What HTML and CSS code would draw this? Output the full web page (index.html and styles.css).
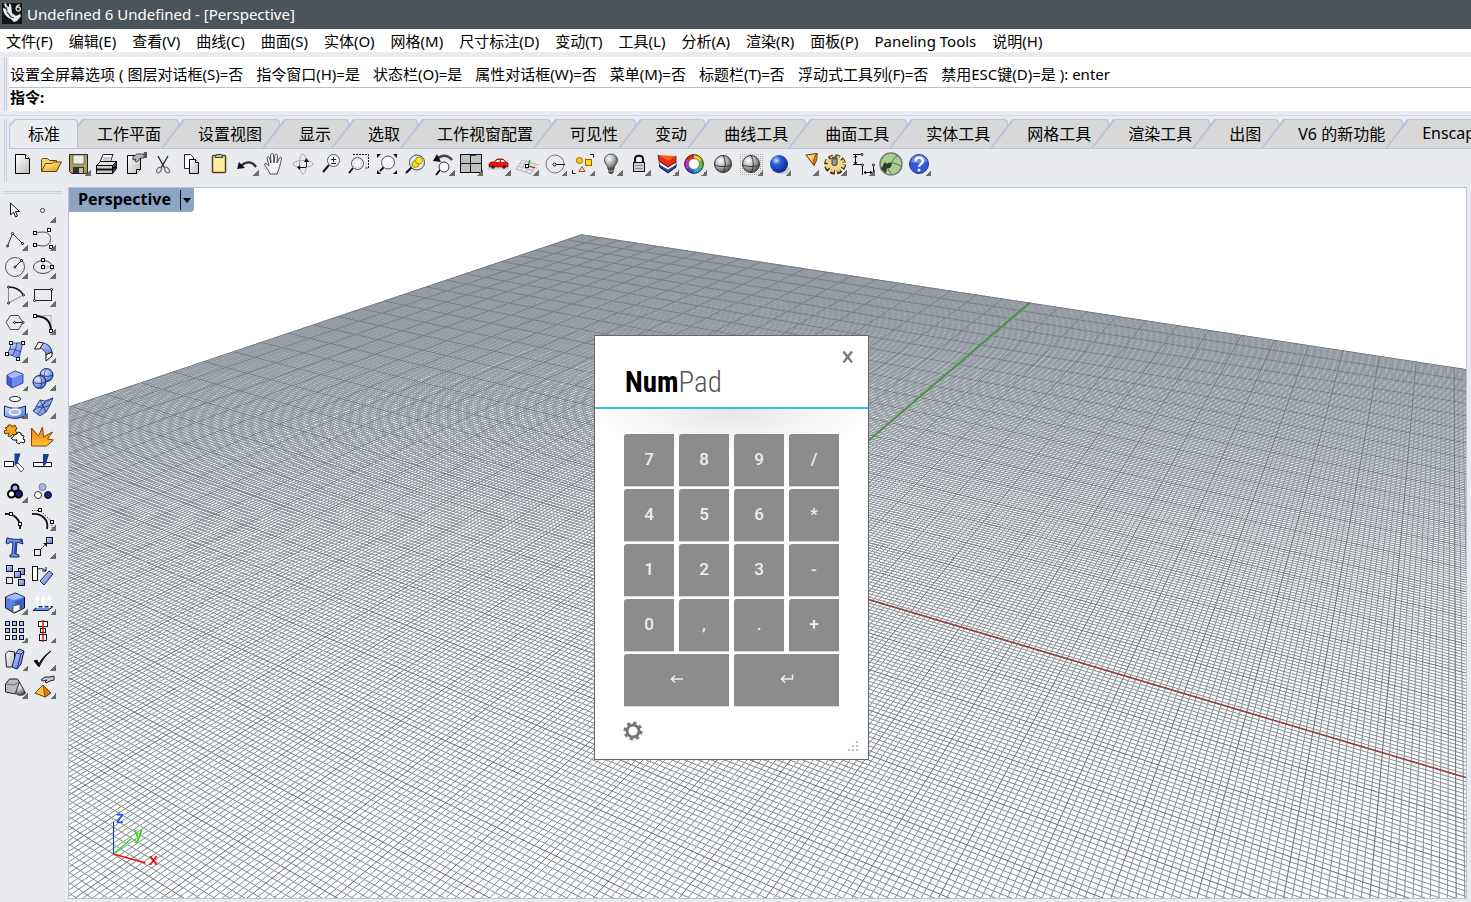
FILE: index.html
```html
<!DOCTYPE html>
<html lang="zh-CN">
<head>
    <meta charset="UTF-8">
    <meta name="viewport" content="width=device-width, initial-scale=1.0">
    <title>Undefined 6 Undefined - [Perspective]</title>
    <link rel="stylesheet" href="styles.css">
</head>
<body>

    <svg class="defs" width="0" height="0" aria-hidden="true">
        <defs>
            <linearGradient id="g-yellow" x1="0" y1="0" x2="1" y2="1"><stop offset="0" stop-color="#fff3a0"/><stop offset="1" stop-color="#e89a10"/></linearGradient>
            <linearGradient id="g-blue" x1="0" y1="0" x2="1" y2="1"><stop offset="0" stop-color="#d5e2ff"/><stop offset="1" stop-color="#4a70e0"/></linearGradient>
            <linearGradient id="g-grey" x1="0" y1="0" x2="1" y2="1"><stop offset="0" stop-color="#fff"/><stop offset="1" stop-color="#bbb"/></linearGradient>
            <linearGradient id="g-orange" x1="0" y1="0" x2="0" y2="1"><stop offset="0" stop-color="#f77a00"/><stop offset="1" stop-color="#ffc23a"/></linearGradient>
            <radialGradient id="b-grey" cx=".35" cy=".3" r=".75"><stop offset="0" stop-color="#fff"/><stop offset=".5" stop-color="#b4b4b4"/><stop offset="1" stop-color="#444"/></radialGradient>
            <radialGradient id="b-blue" cx=".35" cy=".3" r=".8"><stop offset="0" stop-color="#d8e6ff"/><stop offset=".3" stop-color="#2a62d8"/><stop offset="1" stop-color="#041c80"/></radialGradient>
            <radialGradient id="b-soft" cx=".35" cy=".3" r=".8"><stop offset="0" stop-color="#e2eaff"/><stop offset="1" stop-color="#4468d8"/></radialGradient>
            <pattern id="dots" width="2" height="2" patternUnits="userSpaceOnUse"><rect width="1" height="1" fill="#b4b4b4"/></pattern>
        </defs>
    </svg>

    <header class="title-bar">
        <svg class="app-icon" viewBox="0 0 20 21"><rect width="20" height="21" fill="#161616"/><path d="M1 5c0 5 3 9 8 11l3 3 3-1 4-5-1-2-4 2-4-3-1-8-2-2 0 4-2-1-1-3-2 1 2 5z" fill="#eee"/><path d="M5 9l4 5 3 1M4 4l1 4" fill="none" stroke="#444" stroke-width="1.300"/><path d="M18 2c-4-1-5 6-2 6 3 0 3-4 0-4-1 0-2 1-2 2" fill="none" stroke="#ddd" stroke-width="1.300"/></svg>
        <span>Undefined 6 Undefined - [Perspective]</span>
    </header>

    <nav class="menu-bar">
        <button>文件(F)</button><button>编辑(E)</button><button>查看(V)</button><button>曲线(C)</button><button>曲面(S)</button><button>实体(O)</button><button>网格(M)</button><button>尺寸标注(D)</button><button>变动(T)</button><button>工具(L)</button><button>分析(A)</button><button>渲染(R)</button><button>面板(P)</button><button>Paneling Tools</button><button>说明(H)</button>
    </nav>

    <section class="command">
        <div class="history">
            <span class="lead">设置全屏幕选项 ( </span>
            <button>图层对话框(S)=否</button>
            <button>指令窗口(H)=是</button>
            <button>状态栏(O)=是</button>
            <button>属性对话框(W)=否</button>
            <button>菜单(M)=否</button>
            <button>标题栏(T)=否</button>
            <button>浮动式工具列(F)=否</button>
            <span><button>禁用ESC键(D)=是</button> ): enter</span>
        </div>
        <div class="prompt"><label for="cmd">指令:</label><input id="cmd" type="text"></div>
    </section>

    <section class="toolbars">
        <div class="tabs">
            <button class="tab active"><span>标准</span></button>
            <button class="tab"><span>工作平面</span></button>
            <button class="tab"><span>设置视图</span></button>
            <button class="tab"><span>显示</span></button>
            <button class="tab"><span>选取</span></button>
            <button class="tab"><span>工作视窗配置</span></button>
            <button class="tab"><span>可见性</span></button>
            <button class="tab"><span>变动</span></button>
            <button class="tab"><span>曲线工具</span></button>
            <button class="tab"><span>曲面工具</span></button>
            <button class="tab"><span>实体工具</span></button>
            <button class="tab"><span>网格工具</span></button>
            <button class="tab"><span>渲染工具</span></button>
            <button class="tab"><span>出图</span></button>
            <button class="tab"><span>V6 的新功能</span></button>
            <button class="tab"><span>Enscape</span></button>
        </div>
        <div class="tools">
            <button class="tool" aria-label="新建"><svg viewBox="0 0 28 28"><path d="M7.500 4.500h10l4 4v15h-14z" fill="url(#g-grey)" stroke="#000"/><path d="M17.500 4.500v4h4" fill="#fff" stroke="#000"/></svg></button>
            <button class="tool" aria-label="打开"><svg viewBox="0 0 28 28"><path d="M5.500 21V9.500l1-1h5l2 2h7v3" fill="#f6d565" stroke="#5c4408"/><path d="M5.500 21.500l4-8h6l2-1.500h8l-5 9.500z" fill="url(#g-yellow)" stroke="#5c4408"/></svg></button>
            <button class="tool more" aria-label="保存"><svg viewBox="0 0 28 28"><path d="M5.500 4.500h18v19h-16l-2-2z" fill="#a9a05b" stroke="#222"/><rect x="9" y="5" width="11" height="9" fill="#e8eee8" stroke="#555" stroke-width=".7"/><rect x="9" y="17" width="11" height="6" fill="#333"/><rect x="15" y="18" width="4" height="5" fill="#bbb"/></svg></button>
            <button class="tool" aria-label="打印"><svg viewBox="0 0 28 28"><path d="M8 12l3-7.500h10l-3 8" fill="#fff" stroke="#222"/><path d="M12 8h6M11 10h6" stroke="#999"/><path d="M4.500 15.500l4-4h16l-4 4z" fill="#ddd" stroke="#000"/><path d="M4.500 15.500h16v8h-16z" fill="#ccc" stroke="#000"/><path d="M20.500 15.500l4-4v7l-4 5z" fill="#555" stroke="#000"/><path d="M5 19.500h15.500l4-4" fill="none" stroke="#111" stroke-width="1.800"/></svg></button>
            <button class="tool" aria-label="文件属性"><svg viewBox="0 0 28 28"><path d="M7.500 5.500h13v14l-4 4h-9z" fill="url(#g-grey)" stroke="#000"/><path d="M20.500 19.500h-4v4" fill="#fff" stroke="#000"/><path d="M13 7l4-3h7v4l-4 0-2 3-2 1-1-1 1-2-3 1z" fill="#bbb" stroke="#222" stroke-width=".8"/><path d="M24 2v6h3V2z" fill="#555"/></svg></button>
            <button class="tool" aria-label="剪切"><svg viewBox="0 0 28 28"><path d="M10 6l6.500 12M20 6l-7 12" stroke="#222" stroke-width="1.300"/><ellipse cx="11" cy="20" rx="2" ry="3" transform="rotate(35 11 20)" fill="none" stroke="#777" stroke-width="1.300"/><ellipse cx="19" cy="20" rx="2" ry="3" transform="rotate(-35 19 20)" fill="none" stroke="#777" stroke-width="1.300"/></svg></button>
            <button class="tool" aria-label="复制"><svg viewBox="0 0 28 28"><path d="M8.500 4.500h6l3 3v11h-9z" fill="#fff" stroke="#222"/><path d="M13.500 9.500h6l3 3v11h-9z" fill="url(#g-grey)" stroke="#000"/><path d="M19.500 9.500v3h3" fill="#fff" stroke="#000"/></svg></button>
            <button class="tool" aria-label="粘贴"><svg viewBox="0 0 28 28"><rect x="8.500" y="5.500" width="13" height="17" rx="1" fill="#ffef9c" stroke="#4c4020" stroke-width="1.500"/><path d="M11 7.500l1.500-3h5l1.500 3z" fill="#bbb" stroke="#444"/></svg></button>
            <button class="tool more" aria-label="撤销"><svg viewBox="0 0 28 28"><path d="M9 16c5-5 11-5 15 1" fill="none" stroke="#333" stroke-width="2.300"/><path d="M5 19l2-7 6 6z" fill="#111"/></svg></button>
            <button class="tool" aria-label="平移"><svg viewBox="0 0 28 28"><path d="M10 24c-1-4-5-7-5.500-10 1-1.500 3 0 4.500 2L7 8c.5-2 2-1.500 2.500 0l1.500 5-.5-8c.5-2 2.500-2 3 0l.5 8 1-7.500c.5-2 2.500-1.500 2.500 0L17 13l2.500-5c1-1.500 2.500-.5 2 1-1.500 5-2 10-4.500 15z" fill="#f5f5f5" stroke="#222" stroke-width=".8"/></svg></button>
            <button class="tool" aria-label="旋转视图"><svg viewBox="0 0 28 28"><ellipse cx="15" cy="14" rx="10" ry="3.500" fill="none" stroke="#aaa"/><ellipse cx="15" cy="14" rx="3.500" ry="10" fill="none" stroke="#aaa"/><path d="M12 17.500h6M18.500 11v6" stroke="#111"/><path d="M12 15v5l-3-2.500zM16 12h5l-2.500-4z" fill="#111"/></svg></button>
            <button class="tool" aria-label="动态缩放"><svg viewBox="0 0 28 28"><path d="M13 15l-6 7" stroke="#111" stroke-width="2"/><circle cx="17.500" cy="10.500" r="6" fill="#f5f5f5" stroke="#555"/><path d="M15 9.500h5M17.500 7v5M15 13.500h5" stroke="#222"/></svg></button>
            <button class="tool" aria-label="框选缩放"><svg viewBox="0 0 28 28"><path d="M9 4.500h15.500v13.500h-4" fill="none" stroke="#111" stroke-dasharray="2 1"/><path d="M9 18l-4 5" stroke="#111" stroke-width="2"/><circle cx="13.500" cy="13.500" r="6" fill="#f5f5f5" stroke="#555"/><rect x="10" y="10" width="7" height="7" fill="none" stroke="#ccc" stroke-dasharray="2 1"/></svg></button>
            <button class="tool" aria-label="缩放至最大范围"><svg viewBox="0 0 28 28"><path d="M12 17l-4 4" stroke="#111" stroke-width="2"/><circle cx="16" cy="12.500" r="6.500" fill="#f5f5f5" stroke="#555"/><path d="M5 4h4l-4 4zM25 4h-4l4 4zM5 24h4l-4-4zM25 24h-4l4-4z" fill="#111"/></svg></button>
            <button class="tool" aria-label="缩放至选取物件"><svg viewBox="0 0 28 28"><path d="M12 17l-6 6" stroke="#111" stroke-width="2.200"/><circle cx="17" cy="12.500" r="7.500" fill="#eee" stroke="#444"/><circle cx="15.500" cy="14" r="3.500" fill="#f8e01a" stroke="#776600" stroke-width=".7"/><circle cx="19" cy="10.500" r="3.500" fill="#ffea20" stroke="#776600" stroke-width=".7"/></svg></button>
            <button class="tool more" aria-label="还原视图"><svg viewBox="0 0 28 28"><path d="M12 20l-4 5" stroke="#111" stroke-width="2"/><circle cx="16" cy="17" r="5" fill="#f5f5f5" stroke="#333"/><path d="M9 9c5-5 11-4 15 1" fill="none" stroke="#444" stroke-width="2.500"/><path d="M5 11l4-7 4 8z" fill="#111"/></svg></button>
            <button class="tool more" aria-label="四个视图"><svg viewBox="0 0 28 28"><rect x="4.500" y="4.500" width="21" height="18" fill="#c0c0c0" stroke="#111"/><path d="M5 13.500h20M14.500 5v17.500" stroke="#111"/><path d="M15 5.500h5" stroke="#1836b0"/></svg></button>
            <button class="tool more" aria-label="设置视图"><svg viewBox="0 0 28 28"><path d="M4 19h21" stroke="#bbb"/><path d="M5 17v-3l2-2h3l3-3h6l3 3 2 1v4z" fill="#e81414" stroke="#7a0000" stroke-width=".7"/><path d="M11 12l2.500-2h2v2zM17 10h2l2 2h-4z" fill="#fff"/><circle cx="9" cy="17" r="1.700" fill="#222"/><circle cx="20" cy="17" r="1.700" fill="#222"/></svg></button>
            <button class="tool more" aria-label="设置工作平面"><svg viewBox="0 0 28 28"><path d="M10 10l17 5M8 13l17 5M6 16l16 5M4 19l15 5M10 10l-6 9M14 11l-5 9M19 12l-5 10M23 14l-4 10" fill="none" stroke="#b4b4b4"/><path d="M16 16l2-6" stroke="#1aa01a" stroke-width="1.300"/><path d="M16 16l7 2" stroke="#e01010" stroke-width="1.300"/><rect x="13.500" y="14.500" width="3" height="3" fill="#fff" stroke="#000"/></svg></button>
            <button class="tool more" aria-label="圆"><svg viewBox="0 0 28 28"><circle cx="15" cy="14" r="9" fill="none" stroke="#777"/><path d="M16 14.500h9" stroke="#111"/><circle cx="14.500" cy="14.500" r="1.500" fill="#fff" stroke="#111"/></svg></button>
            <button class="tool more" aria-label="选取物件"><svg viewBox="0 0 28 28"><circle cx="11.500" cy="10.500" r="3" fill="#ffc91a" stroke="#a06000"/><rect x="17.500" y="9.500" width="6" height="6" fill="#ffd91a" stroke="#a06000"/><path d="M14 16.500l3 5h-6z" fill="#eee" stroke="#a05020"/><path d="M22 4.500h3.500v3M4.500 20v3.500h3" fill="none" stroke="#111"/></svg></button>
            <button class="tool more" aria-label="显示物件"><svg viewBox="0 0 28 28"><path d="M12 19c0-4-3.500-5-3.500-9a6.500 6 0 0 1 13 0c0 4-3.500 5-3.500 9z" fill="url(#b-grey)" stroke="#555"/><path d="M12 19h6v3l-2 2h-2l-2-2z" fill="#444"/><path d="M12 21h6" stroke="#bbb"/></svg></button>
            <button class="tool more" aria-label="锁定"><svg viewBox="0 0 28 28"><path d="M11 13V9c0-4.500 8-4.500 8 0v4" fill="none" stroke="#111" stroke-width="2"/><rect x="9.500" y="12.500" width="11" height="9" fill="#d0d0d0" stroke="#111"/><path d="M11 15.500h8M11 18.500h8" stroke="#888"/></svg></button>
            <button class="tool more" aria-label="图层"><svg viewBox="0 0 28 28"><g stroke-linejoin="round"><path d="M7.500 14l8.500 5 8-5v3l-8 6-8.500-6z" fill="#1a4fc0" stroke="#112"/><path d="M7 11l9 6 8-5v3l-8 5-8.500-5z" fill="#fff" stroke="#333" stroke-width=".7"/><path d="M6 5l10 5 8-4v6l-8 5-9-6z" fill="#e03018" stroke="#400" stroke-width=".7"/><path d="M6 5l9 .5 9 .5-8 5z" fill="#ff6020"/></g></svg></button>
            <button class="tool more" aria-label="材质"><svg viewBox="0 0 28 28"><g fill="none" stroke-width="4"><path d="M14 6.500a7.500 7.500 0 0 1 6.500 3.800" stroke="#ffd400"/><path d="M20.500 10.300a7.500 7.500 0 0 1 0 7.400" stroke="#62c828"/><path d="M20.500 17.700a7.500 7.500 0 0 1-6.500 3.800" stroke="#18b8d0"/><path d="M14 21.500a7.500 7.500 0 0 1-6.500-3.800" stroke="#3b48d8"/><path d="M7.500 17.700a7.500 7.500 0 0 1 0-7.400" stroke="#c828c8"/><path d="M7.500 10.300a7.500 7.500 0 0 1 6.500-3.800" stroke="#f02020"/></g><circle cx="14" cy="14" r="9.300" fill="none" stroke="#222"/><circle cx="14" cy="14" r="5.500" fill="#fff" stroke="#444" stroke-width=".7"/></svg></button>
            <button class="tool" aria-label="着色"><svg viewBox="0 0 28 28"><circle cx="15" cy="14" r="8.500" fill="url(#b-grey)" stroke="#333"/><path d="M6.500 15c5 2 12 2 17 0M15 5.500c3 5 3 12 0 17" fill="none" stroke="#333"/></svg></button>
            <button class="tool more" aria-label="着色选项"><svg viewBox="0 0 28 28"><rect x="4" y="3" width="23" height="23" fill="url(#dots)"/><circle cx="15" cy="14" r="8.500" fill="url(#b-grey)" stroke="#333"/><path d="M6.500 15c5 2 12 2 17 0M15 5.500c3 5 3 12 0 17" fill="none" stroke="#333"/></svg></button>
            <button class="tool more" aria-label="渲染"><svg viewBox="0 0 28 28"><ellipse cx="18" cy="20" rx="9" ry="4" fill="#ccc"/><circle cx="15" cy="14" r="9" fill="url(#b-blue)"/></svg></button>
            <button class="tool more" aria-label="灯光"><svg viewBox="0 0 28 28"><path d="M14 5l11-1.500-3 12z" fill="url(#g-yellow)" stroke="#553000"/><path d="M22 15.500c2-3 4-8 3-12-3 3-4 8-3 12z" fill="#e87a1a" stroke="#553000" stroke-width=".7"/></svg></button>
            <button class="tool more" aria-label="选项"><svg viewBox="0 0 28 28"><ellipse cx="15" cy="14.500" rx="8" ry="7" fill="none" stroke="#3a2800" stroke-width="6" stroke-dasharray="4 1.900"/><ellipse cx="15" cy="14" rx="8" ry="6.500" fill="none" stroke="#f4d070" stroke-width="4" stroke-dasharray="2.600 3.150" stroke-dashoffset="-.7"/><ellipse cx="15" cy="14" rx="7.500" ry="6" fill="#f4d888"/><path d="M12 8v6c0 2 5 2 5 0V8z" fill="#999" stroke="#333"/><ellipse cx="14.500" cy="8" rx="2.500" ry="1.500" fill="#555"/></svg></button>
            <button class="tool more" aria-label="尺寸标注"><svg viewBox="0 0 28 28"><path d="M5 4.500h8M7.500 5v9M5 14.500h8M6 7.500l1.500-2 1.500 2M6 12l1.500 2L9 12M14.500 16v9M25.500 16v9M16 22.500h8M18 21l-2 1.500 2 1.500M22 21l2 1.500-2 1.500" fill="none" stroke="#111"/><g fill="#fff" stroke="#111"><circle cx="14" cy="4.500" r="1"/><circle cx="14.500" cy="15" r="1"/><circle cx="25.500" cy="15" r="1"/></g></svg></button>
            <button class="tool" aria-label="插件"><svg viewBox="0 0 28 28"><circle cx="15" cy="14" r="11" fill="#a8d090" stroke="#777" stroke-width="1.500"/><path d="M5 18c8-6 12-6 20-2M15 14c2-5 5-8 7-8M11 16c1 4 3 7 5 8" fill="none" stroke="#536b46"/><path d="M7 15l2-3 2 2 3-2 2 3-2 3h-3l-1 5-4-3-1-2 2-1z" fill="#333a30"/></svg></button>
            <button class="tool more" aria-label="帮助"><svg viewBox="0 0 28 28"><circle cx="15" cy="14" r="9.500" fill="#3556d8" stroke="#20339a"/><path d="M7 11a8.500 8.500 0 0 1 16 0c-4 3-12 3-16 0z" fill="#8fa6f2" opacity=".7"/><path d="M11.500 11.500c0-5 7.500-5 7.500-.5 0 3-4 3-4 6" fill="none" stroke="#fff" stroke-width="2.300"/><circle cx="15" cy="20" r="1.500" fill="#fff"/></svg></button>
        </div>
    </section>

    <main class="workspace">
        <aside class="toolbox">
            <button class="tool" aria-label="选取"><svg viewBox="0 0 28 28"><path d="M9.500 6v12l3-3 2 5 2-1-2-4.500h4z" fill="#fff" stroke="#111"/></svg></button>
            <button class="tool more" aria-label="点"><svg viewBox="0 0 28 28"><circle cx="13.500" cy="13.500" r="2" fill="#fff" stroke="#333"/></svg></button>

            <button class="tool more" aria-label="多重直线"><svg viewBox="0 0 28 28"><path d="M6.500 21l5-12.500 10 10" fill="none" stroke="#333"/><g fill="#fff" stroke="#111"><circle cx="6.500" cy="21" r="1"/><circle cx="11.500" cy="8.500" r="1"/><circle cx="21.500" cy="18.500" r="1"/></g></svg></button>
            <button class="tool more" aria-label="控制点曲线"><svg viewBox="0 0 28 28"><path d="M6 7.500l8-.5c10 0 10 13 1 14-4 0-6-1-9-1" fill="none" stroke="#444"/><path d="M6 7.500L20 5l2 17" fill="none" stroke="#ccc" stroke-dasharray="1 2"/><g fill="#fff" stroke="#111"><rect x="4.500" y="6.500" width="3" height="3"/><rect x="18.500" y="3.500" width="3" height="3"/><rect x="4.500" y="18.500" width="3" height="3"/><rect x="20.500" y="20.500" width="3" height="3"/></g></svg></button>

            <button class="tool more" aria-label="圆形"><svg viewBox="0 0 28 28"><circle cx="14" cy="14" r="9.500" fill="none" stroke="#555"/><path d="M14 14l6.500-6.500" stroke="#111"/><g fill="#fff" stroke="#111"><circle cx="14" cy="14" r="1"/><circle cx="20.500" cy="7.500" r="1"/></g></svg></button>
            <button class="tool more" aria-label="椭圆"><svg viewBox="0 0 28 28"><ellipse cx="14" cy="14" rx="9.500" ry="6.500" fill="none" stroke="#444"/><path d="M14 7v7h9" fill="none" stroke="#999"/><g fill="#fff" stroke="#111"><rect x="12.500" y="5.500" width="3" height="3"/><rect x="12.500" y="12.500" width="3" height="3"/><rect x="21.500" y="12.500" width="3" height="3"/></g></svg></button>

            <button class="tool more" aria-label="圆弧"><svg viewBox="0 0 28 28"><path d="M7.500 6c7 0 12 3 15 8" fill="none" stroke="#111" stroke-width="1.300"/><path d="M7.500 6v16l15-8" fill="none" stroke="#888"/><g fill="#fff" stroke="#111"><circle cx="7.500" cy="6" r="1"/><circle cx="22.500" cy="14" r="1"/><circle cx="7.500" cy="22" r="1"/></g></svg></button>
            <button class="tool more" aria-label="矩形"><svg viewBox="0 0 28 28"><rect x="5.500" y="8.500" width="17" height="11" fill="none" stroke="#222"/><g fill="#fff" stroke="#111"><circle cx="22.500" cy="8.500" r="1"/><circle cx="5.500" cy="19.500" r="1"/></g></svg></button>

            <button class="tool more" aria-label="多边形"><svg viewBox="0 0 28 28"><path d="M9.500 6.500h8l4.500 7-4.500 7h-8l-4.500-7z" fill="none" stroke="#444"/><path d="M14 13.500h8" stroke="#111"/><g fill="#fff" stroke="#111"><circle cx="13.500" cy="13.500" r="1"/><circle cx="22" cy="13.500" r="1"/></g></svg></button>
            <button class="tool more" aria-label="曲线圆角"><svg viewBox="0 0 28 28"><path d="M14 6.500h8v8" fill="none" stroke="#aaa"/><path d="M6 7c10 0 16 4 16 15" fill="none" stroke="#111" stroke-width="2"/><g fill="#fff" stroke="#111"><rect x="4.500" y="5.500" width="3" height="3"/><rect x="20.500" y="20.500" width="3" height="3"/></g></svg></button>

            <button class="tool more" aria-label="曲面"><svg viewBox="0 0 28 28"><path d="M10 6h12c-2 5-2 11-5 16-3-3-7-4-11-5 2-3 4-7 4-11z" fill="url(#g-blue)" stroke="#223a80" stroke-width=".8"/><path d="M16 6c-1 5-2 9-5 13M8 12c4 0 8 1 12 3" fill="none" stroke="#223a80" stroke-width=".8"/><g fill="#fff" stroke="#111"><rect x="8.500" y="4.500" width="3" height="3"/><rect x="20.500" y="4.500" width="3" height="3"/><rect x="4.500" y="15.500" width="3" height="3"/><rect x="15.500" y="20.500" width="3" height="3"/></g></svg></button>
            <button class="tool more" aria-label="曲面圆角"><svg viewBox="0 0 28 28"><path d="M12 6c7 0 11 4 11 11l-6 2c0-5-3-8-8-8z" fill="url(#g-blue)" stroke="#111" stroke-width=".8"/><path d="M5.500 12l4-7 5 1-4 6z" fill="#fff" stroke="#111"/><path d="M17 18l6-3v4l-6 5z" fill="#fff" stroke="#111"/></svg></button>

            <button class="tool more" aria-label="立方体"><svg viewBox="0 0 28 28"><path d="M6 10l5 3v10l-5-4z" fill="#3b5fd0"/><path d="M6 10l8-4 8 3-11 4z" fill="#a8bcff"/><path d="M11 13l11-4v9l-11 5z" fill="#6a8cf0"/><path d="M6 10l8-4 8 3v9l-11 5-5-4z" fill="none" stroke="#1c2c70" stroke-width=".8"/></svg></button>
            <button class="tool more" aria-label="布尔运算"><svg viewBox="0 0 28 28"><circle cx="17.500" cy="10" r="6.500" fill="url(#b-soft)" stroke="#101c60"/><path d="M17.500 4c-3 3-3 9 0 12M11 9c4 3 9 3 13 1" fill="none" stroke="#101c60" stroke-width=".7"/><circle cx="10.500" cy="17" r="6.500" fill="url(#b-soft)" stroke="#101c60"/><path d="M10.500 11c3 3 3 9 0 12M4 17c4 2 9 2 13 0" fill="none" stroke="#101c60" stroke-width=".7"/></svg></button>

            <button class="tool more" aria-label="投影"><svg viewBox="0 0 28 28"><ellipse cx="14" cy="6" rx="5.500" ry="2.500" fill="#fff" stroke="#222"/><path d="M3.500 13c7 3 14 3 21 0v10c-7 3-14 3-21 0z" fill="url(#g-blue)" stroke="#112050"/><ellipse cx="14" cy="19" rx="5.500" ry="3" fill="#a8bbff" stroke="#fff" stroke-width="1.500"/></svg></button>
            <button class="tool more" aria-label="网格曲面"><svg viewBox="0 0 28 28"><path d="M4 18c3-3 4-7 7-11l5 1 8-3c-2 5-4 10-7 14l-6 4z" fill="url(#g-blue)" stroke="#182860" stroke-width=".8"/><path d="M16 8c-2 5-4 9-7 13M7 13l6 2 8-3M4 18l20-13M11 7l6 12" fill="none" stroke="#182860" stroke-width=".7"/></svg></button>

            <button class="tool" aria-label="组合"><svg viewBox="0 0 28 28"><path d="M4 7l3-1 0-2 3 0 1 2 3-2 2 4-2 1 2 3-3 2-1-1-3 3-2-1 1-3-4 1-1-3 3-1z" fill="#f5a51d" stroke="#6a3b00"/><path d="M13 14l3-1 1-2 3 1v2l3 1-1 3 2 1-1 3-3-1-2 2-3-2 1-2-4 0-2-2 2-1z" fill="#fff" stroke="#111"/></svg></button>
            <button class="tool" aria-label="炸开"><svg viewBox="0 0 28 28"><path d="M2.500 25V7l7 8 4-9 1 10 9-5-5 7 6 1-7 6z" fill="url(#g-orange)" stroke="#8a3d00"/></svg></button>

            <button class="tool" aria-label="修剪"><svg viewBox="0 0 28 28"><path d="M3.500 12.500h9v5h-9z" fill="#fff" stroke="#111"/><path d="M14 15l3-1 6 6-3 3z" fill="#fff" stroke="#555"/><path d="M13.500 4.500h6l-3 10-3 2z" fill="#1f3c98"/></svg></button>
            <button class="tool" aria-label="分割"><svg viewBox="0 0 28 28"><path d="M4.500 13.500h18v4h-18z" fill="#fff" stroke="#111"/><path d="M14 5h6l-3 10-3 3z" fill="#1f3c98"/></svg></button>

            <button class="tool more" aria-label="群组"><svg viewBox="0 0 28 28"><g stroke="#000" stroke-width="2"><circle cx="14" cy="11" r="3.500" fill="#a8b4f0"/><circle cx="10.500" cy="17" r="3.500" fill="#fff"/><circle cx="17.500" cy="17" r="3.500" fill="#20208a"/></g></svg></button>
            <button class="tool" aria-label="解散群组"><svg viewBox="0 0 28 28"><circle cx="13.500" cy="10" r="3.500" fill="#a8b4f0" stroke="#778"/><circle cx="9" cy="18" r="3.500" fill="#fff" stroke="#333"/><circle cx="19" cy="18" r="3.500" fill="#20208a" stroke="#112"/></svg></button>

            <button class="tool" aria-label="编辑点"><svg viewBox="0 0 28 28"><path d="M4 9c9-1 16 6 15 15" fill="none" stroke="#111" stroke-width="1.800"/><g fill="#fff" stroke="#111"><rect x="8.500" y="7.500" width="3" height="3"/><rect x="17.500" y="17.500" width="3" height="3"/></g></svg></button>
            <button class="tool more" aria-label="控制点"><svg viewBox="0 0 28 28"><path d="M3 9c10-1 17 6 15 15" fill="none" stroke="#111" stroke-width="1.800"/><path d="M3 5.500h8l12 11v8" fill="none" stroke="#111" stroke-dasharray="1 1.500"/><g fill="#fff" stroke="#111"><rect x="9.500" y="3.500" width="3" height="3"/><rect x="21.500" y="15.500" width="3" height="3"/></g></svg></button>

            <button class="tool" aria-label="文字"><svg viewBox="0 0 28 28"><path d="M6 5c5 1 10 2 15 1l1 5-3-1-3-1-1 12 3 1v2h-9v-2l2-1 1-12-3 0-2 2-2-1z" fill="#6b92f0" stroke="#14286a"/><path d="M18 7l3 0 1 3-2-1zM14 9l2 0-1 12-2 0z" fill="#2848a8"/></svg></button>
            <button class="tool more" aria-label="移动"><svg viewBox="0 0 28 28"><path d="M12 16l5-5" stroke="#222" stroke-dasharray="2 1"/><path d="M14 10h4v4z" fill="#111"/><rect x="5.500" y="16.500" width="6" height="6" fill="#e8e8e8" stroke="#111"/><rect x="17.500" y="4.500" width="6" height="6" fill="url(#g-blue)" stroke="#111"/></svg></button>

            <button class="tool" aria-label="复制物件"><svg viewBox="0 0 28 28"><g stroke="#111"><rect x="5.500" y="4.500" width="6" height="6" fill="url(#g-blue)"/><rect x="5.500" y="16.500" width="6" height="6" fill="#eee"/><rect x="17.500" y="7.500" width="6" height="6" fill="url(#g-blue)"/><rect x="13.500" y="10.500" width="6" height="6" fill="url(#g-blue)"/><rect x="17.500" y="18.500" width="6" height="6" fill="url(#g-blue)"/></g></svg></button>
            <button class="tool" aria-label="旋转"><svg viewBox="0 0 28 28"><rect x="3.500" y="5.500" width="5" height="14" fill="#fff" stroke="#111"/><path d="M11 20l9-10 4 3-9 11z" fill="url(#g-blue)" stroke="#112050"/><path d="M9 8c4-1 6 0 8 2M17 6v4h-4" fill="none" stroke="#111"/></svg></button>

            <button class="tool more" aria-label="实体编辑"><svg viewBox="0 0 28 28"><path d="M4.500 8l10-4 9 4v11l-10 5-9-5z" fill="#5c82e8" stroke="#111"/><path d="M5 8l9.500-3.500 8.500 3.500-10 3z" fill="#a8beff"/><path d="M14 12l9-3v10l-9 4z" fill="#3c60d0"/><path d="M12 17l7-2v6l-7 3z" fill="#fff" stroke="#333" stroke-width=".8"/></svg></button>
            <button class="tool more" aria-label="拉伸"><svg viewBox="0 0 28 28"><path d="M4 21.500l5-4h15l-5 4z" fill="#6e90f0" stroke="#112050"/><path d="M8.500 19V8M14.500 19V8M20.500 19V8" stroke="#fff" stroke-width="2"/><path d="M5.500 11l3-5 3 5zM11.500 11l3-5 3 5zM17.500 11l3-5 3 5z" fill="#fff"/></svg></button>

            <button class="tool more" aria-label="阵列"><svg viewBox="0 0 28 28"><g fill="#a9c0ff" stroke="#111"><rect x="4.500" y="4.500" width="4" height="4"/><rect x="11.500" y="4.500" width="4" height="4"/><rect x="18.500" y="4.500" width="4" height="4"/><rect x="4.500" y="11.500" width="4" height="4"/><rect x="11.500" y="11.500" width="4" height="4"/><rect x="18.500" y="11.500" width="4" height="4"/><rect x="4.500" y="18.500" width="4" height="4" fill="#fff"/><rect x="11.500" y="18.500" width="4" height="4"/><rect x="18.500" y="18.500" width="4" height="4"/></g></svg></button>
            <button class="tool more" aria-label="对齐"><svg viewBox="0 0 28 28"><g fill="#fff" stroke="#111"><rect x="9.500" y="4.500" width="9" height="5"/><rect x="11.500" y="11.500" width="5" height="4"/><rect x="10.500" y="17.500" width="7" height="6"/></g><path d="M14 3v22" stroke="#d01818" stroke-width="1.500"/></svg></button>

            <button class="tool more" aria-label="变形"><svg viewBox="0 0 28 28"><path d="M4.500 9l3-3 6 1 0 12-3 3h-5z" fill="url(#g-grey)" stroke="#222"/><path d="M15 8l3-4 5 2-3 13-4 5-5-2z" fill="url(#g-blue)" stroke="#112050"/><path d="M15 8l5 1 3-3M20 9l-4 15" fill="none" stroke="#112050" stroke-width=".8"/></svg></button>
            <button class="tool more" aria-label="检查"><svg viewBox="0 0 28 28"><path d="M5 16l3-1 2 4c3-6 7-10 12-13-5 4-9 9-12 16z" fill="#111" stroke="#111"/></svg></button>

            <button class="tool more" aria-label="渲染网格"><svg viewBox="0 0 28 28"><path d="M4.500 11l4-5h8l2 3v8l-4 4-10-2z" fill="#bbb" stroke="#222"/><path d="M5 11l8 1 5-3" fill="none" stroke="#666"/><path d="M18.500 9l6 11c-2 3-8 3-10 0z" fill="url(#b-grey)" stroke="#333"/></svg></button>
            <button class="tool more" aria-label="打开属性"><svg viewBox="0 0 28 28"><path d="M14 12l8 8-6 4-10-4z" fill="#ffc23a" stroke="#6a3b00"/><path d="M14 12l8 8-6 4z" fill="#d08018" stroke="#6a3b00" stroke-width=".7"/><path d="M12 7l4-3h5l4-1v4l-4 1-4 2-1-1 2-2-4 1z" fill="#ccc" stroke="#222"/></svg></button>
        </aside>

        <section class="viewport">
            <canvas id="grid"></canvas>
            <div class="view-title">
                <button class="view-name">Perspective</button>
                <button class="view-menu" aria-label="视图菜单"></button>
            </div>

            <svg class="axes" viewBox="0 0 60 60">
                <path d="M9.500 46V14" stroke="#1030c0"/>
                <path d="M9.500 46L28 30" stroke="#30e010" stroke-width="1.300"/>
                <path d="M9.500 46l32 9" stroke="#f01010" stroke-width="1.300"/>
                <text x="12" y="15" fill="#1c50ff">z</text>
                <text x="30" y="31" fill="#30e010">y</text>
                <text x="45" y="57" fill="#f01010">x</text>
            </svg>

            <div class="numpad">
                <header class="numpad-head">
                    <h2><b>Num</b>Pad</h2>
                    <button class="close" aria-label="Close"><svg viewBox="0 0 12 14"><path d="M1.500 1.500l8.500 11M10 1.500l-8.500 11" stroke="#777" stroke-width="2.200"/></svg></button>
                </header>
                <div class="keys">
                    <button>7</button><button>8</button><button>9</button><button>/</button>
                    <button>4</button><button>5</button><button>6</button><button>*</button>
                    <button>1</button><button>2</button><button>3</button><button>-</button>
                    <button>0</button><button>,</button><button>.</button><button>+</button>
                    <button class="wide" aria-label="Backspace"><svg viewBox="0 0 14 12"><path d="M1.500 6H13M5 2.500L1.500 6 5 9.500" fill="none" stroke="#eee" stroke-width="1.500"/></svg></button>
                    <button class="wide" aria-label="Enter"><svg viewBox="0 0 14 12"><path d="M1.500 6H12.500V1.500M5 2.500L1.500 6 5 9.500" fill="none" stroke="#eee" stroke-width="1.500"/></svg></button>
                </div>
                <footer class="numpad-foot">
                    <button class="gear" aria-label="Settings"><svg viewBox="0 0 20 20"><circle cx="10" cy="10" r="8" fill="none" stroke="#777" stroke-width="3" stroke-dasharray="3.140 3.140"/><circle cx="10" cy="10" r="6" fill="#fff" stroke="#777" stroke-width="3"/></svg></button>
                    <svg class="grip" viewBox="0 0 12 12"><path d="M8 1h2M4 5h2M8 5h2M0 9h2M4 9h2M8 9h2" stroke="#b4c1d8" stroke-width="2"/></svg>
                </footer>
            </div>
        </section>
    </main>

    <script src="grid.js"></script>
</body>
</html>
```

FILE: styles.css
```css
* { box-sizing: border-box; }
body { margin: 0; height: 100vh; display: flex; flex-direction: column; overflow: hidden; background: #eaebef; color: #000; font-family: "Noto Sans", "Noto Sans CJK SC", sans-serif; font-size: 15px; }
button { border: 0; padding: 0; margin: 0; background: none; font: inherit; color: inherit; }
svg { display: block; }
.defs { position: absolute; }

.title-bar { display: flex; align-items: center; gap: 5px; height: 29px; padding: 0 0 2px 2px; background: #4b545a; color: #fff; }
.app-icon { width: 20px; height: 21px; }

.menu-bar { display: flex; height: 23px; background: #fff; white-space: nowrap; }
.menu-bar button { padding: 0 10px 0 6px; line-height: 20px; }

.command { margin: 5px 0 4px 4px; border-left: 1px solid #c9d2e4; padding-left: 4px; white-space: nowrap; line-height: 20px; box-shadow: inset 1px 0 #eaebef, inset 2px 0 #c9d2e4; }
.history { display: flex; gap: 13px; height: 31px; padding: 7px 1px 0; background: #fff; border-bottom: 1px solid #b8c0d0; overflow: hidden; }
.history button { height: 20px; }
.history .lead { margin-right: -9px; }
.prompt { display: flex; height: 23px; padding: 0 0 4px 1px; background: #fff; font-weight: bold; line-height: 18px; }
.prompt input { flex: 1; border: 0; outline: 0; background: none; font: inherit; }

.toolbars { border-top: 1px solid #d0d7e8; padding-top: 3px; height: 72px; background: linear-gradient(#c9d2e4, #c9d2e4) 4px 3px / 1px 63px no-repeat, linear-gradient(#c9d2e4, #c9d2e4) 6px 3px / 1px 63px no-repeat; }
.tabs { display: flex; height: 30px; margin-left: 9px; overflow: hidden; font-size: 16px; border-bottom: 1px solid #b9c3dc; }
.tab { position: relative; flex: none; height: 29px; padding: 0 18px 2px 19px; white-space: nowrap; }
.tab span { position: relative; z-index: 2; }
.tab::before, .tab::after { content: ""; position: absolute; top: 0; bottom: 0; left: -18px; right: 0; background: #b9c3dc; border-top-right-radius: 4px; clip-path: polygon(0 100%, 22px 0, 100% 0, 100% 100%); }
.tab::after { top: 1px; left: -16px; right: 1px; background: #d8d8d8; }
.tab.active { z-index: 3; }
.tab.active::before, .tab.active::after { left: 0; clip-path: polygon(0 6px, 6px 0, 100% 0, 100% 100%, 0 100%); }
.tab.active::after { left: 1px; background: #eaebef; }
.tools { display: flex; padding-left: 8px; margin-top: 1px; }

.tool { position: relative; flex: none; width: 28px; height: 28px; }
.tool svg { width: 28px; height: 28px; fill: none; }
.more::after { content: ""; position: absolute; right: 1px; bottom: 2px; width: 6px; height: 6px; background: linear-gradient(135deg, transparent 50%, #6c6c6c 50%); }

.workspace { flex: 1; display: flex; min-height: 0; padding: 0 4px 3px 0; }
.toolbox { width: 68px; padding: 10px 0 0 1px; display: grid; grid-template-columns: 28px 28px; grid-auto-rows: 28px; background: linear-gradient(#c9d2e4, #c9d2e4) 3px 4px / 59px 1px no-repeat, linear-gradient(#c9d2e4, #c9d2e4) 3px 6px / 59px 1px no-repeat; }

.viewport { position: relative; flex: 1; min-width: 0; overflow: hidden; background: #fff; border: 1px solid #b8c3dc; }
#grid { position: absolute; inset: 0; width: 100%; height: 100%; }
.view-title { position: relative; display: inline-flex; height: 24px; background: #8ca5c5; font-family: "Open Sans", sans-serif; font-weight: bold; font-size: 16px; line-height: 20px; border-radius: 0 0 4px 0; }
.view-name { padding: 0 9px 2px; }
.view-menu { width: 14px; margin: 2px 0; border-left: 1px solid #111; }
.view-menu::before { content: ""; display: block; border: 4px solid transparent; border-top: 5px solid #000; border-bottom: 0; width: 0; margin: 0 auto; }
.axes { position: absolute; left: 35px; bottom: 30px; width: 60px; height: 60px; font: 600 16px "Open Sans", sans-serif; }

.numpad { position: absolute; left: 525px; top: 147px; width: 275px; border: 1px solid #666; background: #fff; color: #eee; }
.numpad-head { display: flex; justify-content: space-between; height: 73px; padding: 0 14px 0 30px; border-bottom: 2px solid #36bfe8; }
.numpad h2 { margin: 27px 0 0; font: 300 29px/38px "Roboto Condensed", Roboto, sans-serif; color: #555; }
.numpad h2 b { font-weight: 700; color: #000; }
.close { width: 12px; height: 14px; margin-top: 14px; }
.keys { display: grid; grid-template-columns: repeat(4, 50px); grid-auto-rows: 52px; gap: 3px 5px; padding: 25px 29px 0; background: radial-gradient(ellipse 140px 50px at 50% 0, #e6e6e6, #fff); font: 500 17px Roboto, sans-serif; }
.keys button { background: #8c8c8c; border-top-left-radius: 3px; box-shadow: 0 1px #d8d8d8; display: flex; align-items: center; justify-content: center; padding-bottom: 3px; }
.keys .wide { grid-column: span 2; }
.keys svg { width: 14px; height: 12px; }
.numpad-foot { display: flex; justify-content: space-between; padding: 15px 8px 6px 28px; }
.gear, .gear svg { width: 20px; height: 20px; }
.grip { width: 12px; height: 12px; margin-top: 20px; }
```

FILE: grid.js
```js
// Construction plane: 200 cells each way from the origin, a major line every 10
const canvas = document.getElementById('grid');
const N = 200;
const MAJOR = 10;
const origin = [661, 370];
const vanishX = [-1405, -246];
const vanishY = [1382, -246];
const A = 0.3993 / N;
const B = 0.7085 / N;

function draw() {
    const w = canvas.width = canvas.clientWidth;
    const h = canvas.height = canvas.clientHeight;
    const scale = w / 1396;
    const ctx = canvas.getContext('2d');
    const minor = new Float32Array(w * h);
    const major = new Float32Array(w * h);

    // homogeneous screen position of a point on the plane
    function project(x, y) {
        const a = -x * A, b = y * B;
        return [
            origin[0] + a * vanishX[0] + b * vanishY[0],
            origin[1] + a * vanishX[1] + b * vanishY[1],
            1 + a + b
        ];
    }

    function cover(layer, x, y, amount) {
        if (x < 0 || y < 0 || x >= w || y >= h) return;
        const i = y * w + x;
        layer[i] = 1 - (1 - layer[i]) * (1 - Math.min(1, amount));
    }

    // antialiased line: each step shares its ink between two pixels
    function line(layer, x1, y1, x2, y2) {
        let p = project(x1, y1), q = project(x2, y2);
        const near = 0.1;
        if (p[2] < near && q[2] < near) return;
        if (p[2] < near || q[2] < near) {
            const t = (near - p[2]) / (q[2] - p[2]);
            const c = p.map((v, i) => v + (q[i] - v) * t);
            if (p[2] < near) p = c; else q = c;
        }
        const px = p[0] / p[2] * scale, py = p[1] / p[2] * scale;
        const dx = q[0] / q[2] * scale - px, dy = q[1] / q[2] * scale - py;
        const steps = Math.ceil(Math.max(Math.abs(dx), Math.abs(dy)));
        const flat = Math.abs(dx) > Math.abs(dy);
        for (let i = 0; i <= steps; i++) {
            const x = px + dx * i / steps;
            const y = py + dy * i / steps;
            const x0 = flat ? Math.round(x) : Math.floor(x);
            const y0 = flat ? Math.floor(y) : Math.round(y);
            const f = flat ? y - y0 : x - x0;
            cover(layer, x0, y0, (1 - f) * 1.2);
            cover(layer, flat ? x0 : x0 + 1, flat ? y0 + 1 : y0, f * 1.2);
        }
    }

    for (let i = -N; i <= N; i++) {
        const layer = i % MAJOR === 0 ? major : minor;
        line(layer, i, -N, i, N);
        line(layer, -N, i, N, i);
    }

    const minorColor = [146, 154, 162], majorColor = [124, 128, 134];
    const image = ctx.createImageData(w, h);
    for (let i = 0; i < w * h; i++) {
        for (let c = 0; c < 3; c++) {
            const base = 255 + (minorColor[c] - 255) * minor[i];
            image.data[i * 4 + c] = base + (majorColor[c] - base) * major[i];
        }
        image.data[i * 4 + 3] = 255;
    }
    ctx.putImageData(image, 0, 0);

    // the two positive axes
    [[N, 0, '#983a3a'], [0, N, '#3a983a']].forEach(([x, y, color]) => {
        const end = project(x, y);
        ctx.strokeStyle = color;
        ctx.lineWidth = 1.5;
        ctx.beginPath();
        ctx.moveTo(origin[0] * scale, origin[1] * scale);
        ctx.lineTo(end[0] / end[2] * scale, end[1] / end[2] * scale);
        ctx.stroke();
    });
}

draw();
window.addEventListener('resize', draw);
```
